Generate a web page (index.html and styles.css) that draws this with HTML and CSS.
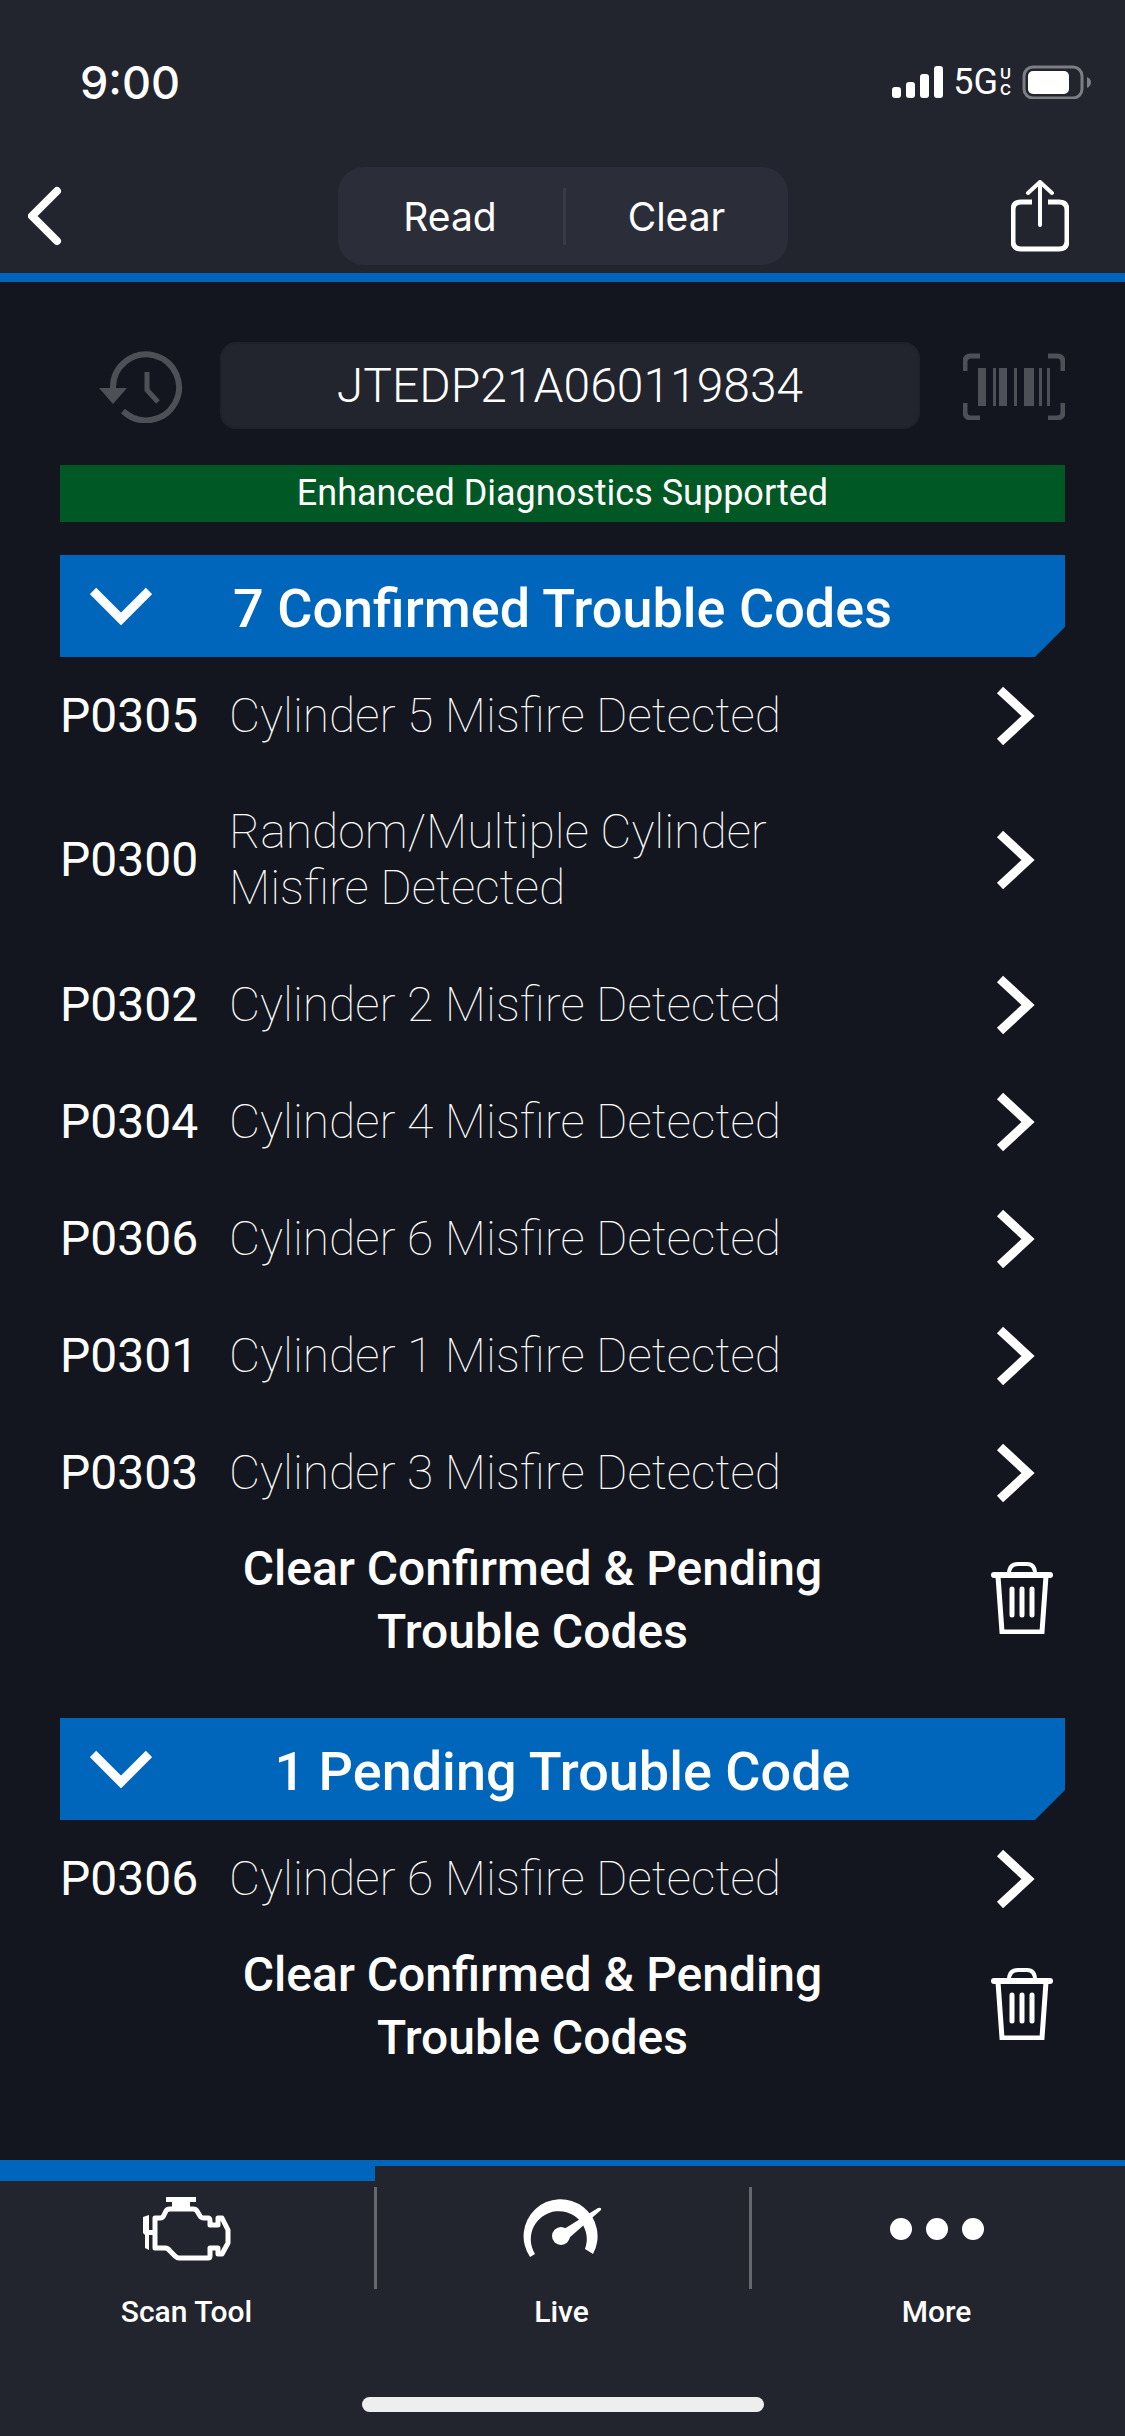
FILE: index.html
```html
<!DOCTYPE html>
<html lang="en">
<head>
    <meta charset="utf-8">
    <meta name="viewport" content="width=device-width, initial-scale=1">
    <title>Scan Tool</title>
    <link rel="stylesheet" href="styles.css">
</head>
<body>
    <!-- Shared icons -->
    <svg class="sprite" aria-hidden="true">
        <symbol id="chevron-down" viewBox="0 0 62 38">
            <path d="M3 4 L31 32 L59 4" fill="none" stroke="#fff" stroke-width="9"/>
        </symbol>
        <symbol id="chevron-right" viewBox="0 0 39 60">
            <path d="M4 4 L32 30 L4 56" fill="none" stroke="#fff" stroke-width="9"/>
        </symbol>
        <symbol id="trash" viewBox="0 0 62 72">
            <g fill="none" stroke="#fff" stroke-width="5" stroke-linecap="round">
                <path d="M3 13 H59" stroke-width="6"/>
                <path d="M18 12 Q18 2 27 2 H36 Q44 2 44 12" stroke-width="4" stroke-linecap="butt"/>
                <path d="M7 14 L11 70 H51 L55 14" stroke-linecap="butt"/>
                <path d="M21 27 V53 M31 27 V53 M41 27 V53"/>
            </g>
        </symbol>
    </svg>

    <header class="header">
        <div class="status">
            <span class="time">9:00</span>
            <div class="status-icons">
                <svg width="52" height="34" viewBox="0 0 52 34" fill="#fff">
                    <rect x="0" y="22" width="9" height="11" rx="3"/>
                    <rect x="14" y="17" width="9" height="16" rx="3"/>
                    <rect x="28" y="9" width="9" height="24" rx="3"/>
                    <rect x="42" y="1" width="9" height="32" rx="3"/>
                </svg>
                <span class="network">5G</span>
                <span class="network-sub"><span>U</span><span>C</span></span>
                <svg width="70" height="34" viewBox="0 0 70 34">
                    <rect x="2" y="2" width="58" height="31" rx="9" fill="none" stroke="#7c7e83" stroke-width="3"/>
                    <rect x="6" y="6" width="41" height="23" rx="5" fill="#fff"/>
                    <path d="M65 12 Q69 14 69 17 Q69 21 65 23 Z" fill="#7c7e83"/>
                </svg>
            </div>
        </div>
        <nav class="toolbar">
            <button class="icon-button back" aria-label="Back">
                <svg width="34" height="60" viewBox="0 0 34 60">
                    <path d="M29 5 L4 30 L29 55" fill="none" stroke="#fff" stroke-width="8" stroke-linecap="round" stroke-linejoin="round"/>
                </svg>
            </button>
            <div class="segments">
                <button>Read</button>
                <button>Clear</button>
            </div>
            <button class="icon-button share" aria-label="Share">
                <svg width="58" height="72" viewBox="0 0 58 72">
                    <g fill="none" stroke="#fff" stroke-width="4" stroke-linecap="round">
                        <path d="M21 22 H10 Q2 22 2 30 V61 Q2 69 10 69 H48 Q56 69 56 61 V30 Q56 22 48 22 H37" stroke-linecap="butt" stroke-width="5"/>
                        <path d="M29 45 V3 M17 13 L29 2 L41 13"/>
                    </g>
                </svg>
            </button>
        </nav>
    </header>

    <main class="content">
        <form class="vin-row">
            <button type="button" class="icon-button" aria-label="VIN history">
                <svg width="85" height="74" viewBox="0 0 85 74">
                    <g fill="none" stroke="#4e5058" stroke-width="6">
                        <path d="M14 39 A33 33 0 1 1 24 62"/>
                        <path d="M48 23 V41 L59 53" stroke-width="5"/>
                    </g>
                    <path d="M0 39 H28 L14 55 Z" fill="#4e5058"/>
                </svg>
            </button>
            <input type="text" class="vin" aria-label="VIN" value="JTEDP21A060119834">
            <button type="button" class="icon-button" aria-label="Scan barcode">
                <svg width="102" height="68" viewBox="0 0 102 68">
                    <path d="M2 19 V10 Q2 4 8 4 H17 M85 4 H94 Q100 4 100 10 V19 M100 51 V60 Q100 66 94 66 H85 M17 66 H8 Q2 66 2 60 V51" fill="none" stroke="#4e5058" stroke-width="5"/>
                    <path d="M15 16h8v38h-8zM30 16h3v38h-3zM36 16h8v38h-8zM51 16h3v38h-3zM61 16h10v38h-10zM76 16h3v38h-3zM84 16h3v38h-3z" fill="#4e5058"/>
                </svg>
            </button>
        </form>

        <div class="banner">Enhanced Diagnostics Supported</div>

        <section class="group">
            <button class="group-header">
                <svg width="62" height="38"><use href="#chevron-down"/></svg>
                <span>7 Confirmed Trouble Codes</span>
            </button>
            <a class="code-row" href="#"><span class="code">P0305</span><span class="desc">Cylinder 5 Misfire Detected</span><svg width="39" height="60"><use href="#chevron-right"/></svg></a>
            <a class="code-row" href="#"><span class="code">P0300</span><span class="desc">Random/Multiple Cylinder Misfire Detected</span><svg width="39" height="60"><use href="#chevron-right"/></svg></a>
            <a class="code-row" href="#"><span class="code">P0302</span><span class="desc">Cylinder 2 Misfire Detected</span><svg width="39" height="60"><use href="#chevron-right"/></svg></a>
            <a class="code-row" href="#"><span class="code">P0304</span><span class="desc">Cylinder 4 Misfire Detected</span><svg width="39" height="60"><use href="#chevron-right"/></svg></a>
            <a class="code-row" href="#"><span class="code">P0306</span><span class="desc">Cylinder 6 Misfire Detected</span><svg width="39" height="60"><use href="#chevron-right"/></svg></a>
            <a class="code-row" href="#"><span class="code">P0301</span><span class="desc">Cylinder 1 Misfire Detected</span><svg width="39" height="60"><use href="#chevron-right"/></svg></a>
            <a class="code-row" href="#"><span class="code">P0303</span><span class="desc">Cylinder 3 Misfire Detected</span><svg width="39" height="60"><use href="#chevron-right"/></svg></a>
            <button class="clear-row">
                <span>Clear Confirmed &amp; Pending Trouble Codes</span>
                <svg width="62" height="72"><use href="#trash"/></svg>
            </button>
        </section>

        <section class="group">
            <button class="group-header">
                <svg width="62" height="38"><use href="#chevron-down"/></svg>
                <span>1 Pending Trouble Code</span>
            </button>
            <a class="code-row" href="#"><span class="code">P0306</span><span class="desc">Cylinder 6 Misfire Detected</span><svg width="39" height="60"><use href="#chevron-right"/></svg></a>
            <button class="clear-row">
                <span>Clear Confirmed &amp; Pending Trouble Codes</span>
                <svg width="62" height="72"><use href="#trash"/></svg>
            </button>
        </section>
    </main>

    <footer class="footer">
        <nav class="tabs">
            <a class="tab active" href="#">
                <svg width="88" height="64" viewBox="0 0 88 64">
                    <path d="M23 0 H53 V5 H47 V12 H29 V5 H23 Z" fill="#fff"/>
                    <path d="M12 21 H17 Q20 21 21 18 L23 14 Q24 12 27 12 H50 Q53 12 54 14 L57 19 Q58 21 61 21 H65 Q67 21 67 24 V28 H75 V21 H79 L85 33 V46 L79 57 H75 V51 H67 V59 Q67 61 65 61 H36 Q34 61 32 59 L27 54 Q25 51 22 51 H12 Z" fill="none" stroke="#fff" stroke-width="5" stroke-linejoin="round"/>
                    <path d="M0 20 L6 18 V33 H11 V38 H6 V53 L2 51 V38 L0 36 Z" fill="#fff"/>
                </svg>
                <span>Scan Tool</span>
            </a>
            <a class="tab" href="#">
                <svg width="78" height="64" viewBox="0 0 78 64">
                    <path d="M7 60 A37 37 0 1 1 70 57 L62 52 A28 28 0 1 0 12 57 Z" fill="#fff"/>
                    <path d="M41 32 L75 11 Q79 10 78 13 L46 41 Z" fill="#fff"/>
                    <circle cx="38" cy="39" r="9" fill="#fff"/>
                </svg>
                <span>Live</span>
            </a>
            <a class="tab" href="#">
                <svg width="94" height="64" viewBox="0 0 94 64" fill="#fff">
                    <circle cx="11" cy="32" r="11"/>
                    <circle cx="47" cy="32" r="11"/>
                    <circle cx="83" cy="32" r="11"/>
                </svg>
                <span>More</span>
            </a>
        </nav>
        <div class="home-bar"></div>
    </footer>
</body>
</html>
```
FILE: styles.css
```css
* {
    box-sizing: border-box;
}
body {
    margin: 0;
    min-height: 100vh;
    display: flex;
    flex-direction: column;
    background-color: #13161e;
    color: #fff;
    font-family: Roboto, sans-serif;
    font-size: 48px;
}
button {
    padding: 0;
    border: none;
    background: none;
    color: inherit;
    font: inherit;
    cursor: pointer;
}
a {
    color: inherit;
    text-decoration: none;
}
svg {
    display: block;
    flex-shrink: 0;
}
.sprite {
    position: absolute;
    width: 0;
    height: 0;
}

/* Status bar and toolbar */
.header {
    background-color: #22252e;
    border-bottom: 9px solid #0066bb;
    font-family: Inter, sans-serif;
}
.status {
    display: flex;
    justify-content: space-between;
    align-items: center;
    height: 167px;
    padding: 0 33px 3px 80px;
}
.time {
    font-size: 45px;
    font-weight: 500;
}
.status-icons {
    display: flex;
    align-items: center;
}
.network {
    margin-left: 9px;
    font-size: 36px;
    font-family: Roboto, sans-serif;
}
.network-sub {
    display: flex;
    flex-direction: column;
    margin: 0 11px 0 2px;
    font-size: 15px;
    font-weight: 600;
    line-height: 16px;
}
.toolbar {
    display: grid;
    grid-template-columns: 1fr 450px 1fr;
    align-items: center;
    height: 106px;
    padding-bottom: 8px;
}
.back {
    justify-self: start;
    margin-left: 28px;
}
.share {
    justify-self: end;
    margin-right: 56px;
}
.segments {
    display: grid;
    grid-template-columns: 1fr 1fr;
    align-items: center;
    height: 98px;
    border-radius: 26px;
    background-color: #2b2e38;
    font-size: 39px;
}
.segments button {
    height: 57px;
}
.segments button + button {
    border-left: 3px solid #383b44;
}

/* VIN and banner */
.content {
    flex: 1;
    padding: 60px 60px 0;
}
.vin-row {
    display: flex;
    align-items: center;
    gap: 36px;
    padding-left: 39px;
}
.vin {
    flex: 1;
    min-width: 0;
    height: 87px;
    margin-right: 7px;
    border: 2px solid #1f222a;
    border-radius: 16px;
    background-color: #22252e;
    color: #fff;
    font: 300 48px Roboto, sans-serif;
    text-align: center;
}
.banner {
    margin-top: 36px;
    background-color: #005825;
    font-size: 36px;
    line-height: 57px;
    text-align: center;
}

/* Trouble codes */
.group {
    margin-top: 33px;
}
.group + .group {
    margin-top: 54px;
}
.group-header {
    display: grid;
    grid-template-columns: 62px 1fr 62px;
    align-items: center;
    width: 100%;
    height: 102px;
    padding: 0 30px;
    background-color: #0066bb;
    clip-path: polygon(0 0, 100% 0, 100% calc(100% - 30px), calc(100% - 30px) 100%, 0 100%);
    font-size: 54px;
    font-weight: 500;
}
.group-header span {
    padding-top: 4px;
}
.code-row {
    display: flex;
    align-items: center;
    min-height: 117px;
    padding: 0 30px 0 0;
    line-height: 56px;
}
.code {
    width: 169px;
}
.desc {
    flex: 1;
    padding: 30px 120px 30px 0;
    font-weight: 100;
}
.clear-row {
    display: flex;
    align-items: center;
    width: 100%;
    height: 133px;
    padding: 0 12px 0 14px;
    font-weight: 500;
    line-height: 63px;
}
.clear-row span {
    max-width: 600px;
    margin: 0 auto;
    padding-top: 4px;
}

/* Bottom tabs */
.footer {
    background-color: #22252e;
    border-top: 6px solid #0066bb;
}
.tabs {
    display: grid;
    grid-template-columns: 1fr 1fr 1fr;
}
.tab {
    position: relative;
    display: flex;
    flex-direction: column;
    align-items: center;
    gap: 33px;
    padding: 31px 2px 0 0;
    font-size: 30px;
    font-weight: 500;
    line-height: 36px;
}
.tab.active::before {
    content: "";
    position: absolute;
    top: 0;
    left: 0;
    width: 100%;
    height: 15px;
    background-color: #0066bb;
}
.tab + .tab::after {
    content: "";
    position: absolute;
    top: 21px;
    left: -1px;
    width: 3px;
    height: 102px;
    background-color: #66686d;
}
.home-bar {
    width: 402px;
    height: 15px;
    margin: 67px auto 24px;
    border-radius: 8px;
    background-color: #efeeee;
}
```
